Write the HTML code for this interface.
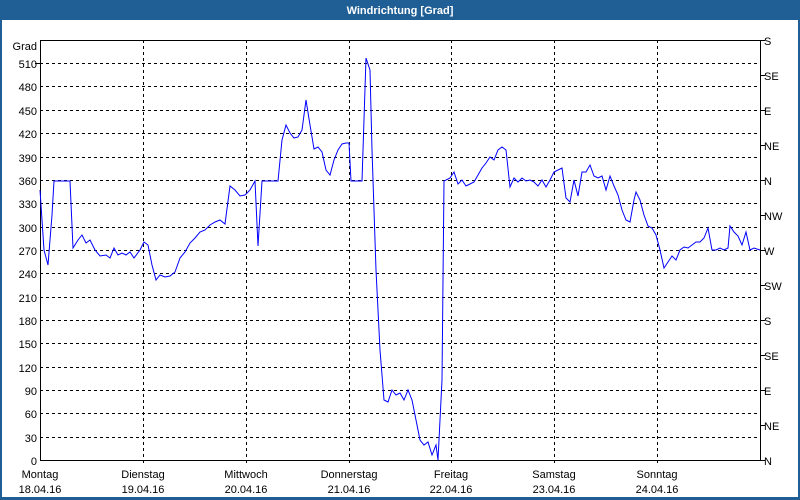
<!DOCTYPE html>
<html><head><meta charset="utf-8"><style>
html,body{margin:0;padding:0;width:800px;height:500px;overflow:hidden;background:#fff}
svg{display:block}
text{font-family:"Liberation Sans",sans-serif;font-size:11px;fill:#000}
</style></head><body>
<svg width="800" height="500" viewBox="0 0 800 500">
<rect x="0" y="0" width="800" height="500" fill="#1f5f95"/>
<rect x="2" y="20" width="796" height="477" fill="#fff"/>
<text x="400" y="14" text-anchor="middle" style="fill:#fff;font-weight:bold;font-size:11px">Windrichtung [Grad]</text>
<g stroke="#000" stroke-width="1" stroke-dasharray="3,3" shape-rendering="crispEdges">
<line x1="40" y1="63.5" x2="760" y2="63.5"/><line x1="40" y1="86.5" x2="760" y2="86.5"/><line x1="40" y1="110.5" x2="760" y2="110.5"/><line x1="40" y1="133.5" x2="760" y2="133.5"/><line x1="40" y1="157.5" x2="760" y2="157.5"/><line x1="40" y1="180.5" x2="760" y2="180.5"/><line x1="40" y1="203.5" x2="760" y2="203.5"/><line x1="40" y1="227.5" x2="760" y2="227.5"/><line x1="40" y1="250.5" x2="760" y2="250.5"/><line x1="40" y1="273.5" x2="760" y2="273.5"/><line x1="40" y1="297.5" x2="760" y2="297.5"/><line x1="40" y1="320.5" x2="760" y2="320.5"/><line x1="40" y1="343.5" x2="760" y2="343.5"/><line x1="40" y1="367.5" x2="760" y2="367.5"/><line x1="40" y1="390.5" x2="760" y2="390.5"/><line x1="40" y1="413.5" x2="760" y2="413.5"/><line x1="40" y1="437.5" x2="760" y2="437.5"/>
<line x1="143.5" y1="40" x2="143.5" y2="465"/><line x1="246.5" y1="40" x2="246.5" y2="465"/><line x1="349.5" y1="40" x2="349.5" y2="465"/><line x1="451.5" y1="40" x2="451.5" y2="465"/><line x1="554.5" y1="40" x2="554.5" y2="465"/><line x1="657.5" y1="40" x2="657.5" y2="465"/>
</g>
<rect x="40.5" y="40.5" width="720" height="420" fill="none" stroke="#000" shape-rendering="crispEdges"/>
<g stroke="#000" shape-rendering="crispEdges">
<line x1="760" y1="40.5" x2="765" y2="40.5"/><line x1="760" y1="75.5" x2="765" y2="75.5"/><line x1="760" y1="110.5" x2="765" y2="110.5"/><line x1="760" y1="145.5" x2="765" y2="145.5"/><line x1="760" y1="180.5" x2="765" y2="180.5"/><line x1="760" y1="215.5" x2="765" y2="215.5"/><line x1="760" y1="250.5" x2="765" y2="250.5"/><line x1="760" y1="285.5" x2="765" y2="285.5"/><line x1="760" y1="320.5" x2="765" y2="320.5"/><line x1="760" y1="355.5" x2="765" y2="355.5"/><line x1="760" y1="390.5" x2="765" y2="390.5"/><line x1="760" y1="425.5" x2="765" y2="425.5"/><line x1="760" y1="460.5" x2="765" y2="460.5"/>
<line x1="35" y1="63.5" x2="40" y2="63.5"/>
</g>
<g text-anchor="end">
<text x="37" y="50">Grad</text>
<text x="37" y="68">510</text><text x="37" y="91">480</text><text x="37" y="115">450</text><text x="37" y="138">420</text><text x="37" y="162">390</text><text x="37" y="185">360</text><text x="37" y="208">330</text><text x="37" y="232">300</text><text x="37" y="255">270</text><text x="37" y="278">240</text><text x="37" y="302">210</text><text x="37" y="325">180</text><text x="37" y="348">150</text><text x="37" y="372">120</text><text x="37" y="395">90</text><text x="37" y="418">60</text><text x="37" y="442">30</text><text x="37" y="465">0</text>
</g>
<g>
<text x="764" y="45">S</text><text x="764" y="80">SE</text><text x="764" y="115">E</text><text x="764" y="150">NE</text><text x="764" y="185">N</text><text x="764" y="220">NW</text><text x="764" y="255">W</text><text x="764" y="290">SW</text><text x="764" y="325">S</text><text x="764" y="360">SE</text><text x="764" y="395">E</text><text x="764" y="430">NE</text><text x="764" y="465">N</text>
</g>
<g text-anchor="middle">
<text x="40" y="478">Montag</text><text x="40" y="493">18.04.16</text>
<text x="143" y="478">Dienstag</text><text x="143" y="493">19.04.16</text>
<text x="246" y="478">Mittwoch</text><text x="246" y="493">20.04.16</text>
<text x="349" y="478">Donnerstag</text><text x="349" y="493">21.04.16</text>
<text x="451" y="478">Freitag</text><text x="451" y="493">22.04.16</text>
<text x="554" y="478">Samstag</text><text x="554" y="493">23.04.16</text>
<text x="657" y="478">Sonntag</text><text x="657" y="493">24.04.16</text>
</g>
<polyline fill="none" stroke="#0000ff" stroke-width="1" points="40,190 44,250 48,265 52,215 54,181 60,181 68,181 70,181 73,248 78,240 82,235 86,243 90,240 95,250 100,256 106,255 110,258 114,248 118,255 122,253 126,255 130,252 134,258 140,250 144,242 148,245 152,265 156,280 160,275 165,277 170,276 175,272 180,258 185,252 190,243 195,238 200,232 205,230 210,225 215,222 220,220 225,224 230,186 235,190 240,196 245,195 250,190 255,181 258,246 262,181 270,181 278,181 282,140 286,125 290,133 294,138 298,137 302,130 306,100 310,125 314,149 318,147 322,152 326,170 330,175 334,160 338,150 342,144 346,143 349,143 351,181 358,181 362,181 366,58 370,70 372,150 376,270 380,350 384,400 388,402 392,390 396,395 400,393 404,400 408,390 412,400 416,420 420,440 424,445 428,442 432,455 436,445 438,460 442,380 444,181 450,178 454,172 458,184 462,180 466,186 470,184 474,182 478,175 482,168 486,163 490,157 494,160 498,150 502,147 506,150 510,187 514,178 518,182 522,178 526,181 530,180 534,182 538,186 542,180 546,187 550,180 554,172 558,170 562,168 566,198 570,202 574,180 578,196 582,172 586,172 590,165 594,176 598,178 602,176 606,190 610,176 614,186 618,195 622,210 626,220 630,222 634,200 636,192 640,200 644,215 648,226 652,228 656,235 660,250 664,268 668,262 672,256 676,260 680,250 684,247 688,248 692,245 696,242 700,242 704,238 708,228 712,250 716,250 720,248 724,250 728,248 730,226 734,232 738,236 742,245 746,232 750,250 754,248 760,250"/>
</svg>
</body></html>
